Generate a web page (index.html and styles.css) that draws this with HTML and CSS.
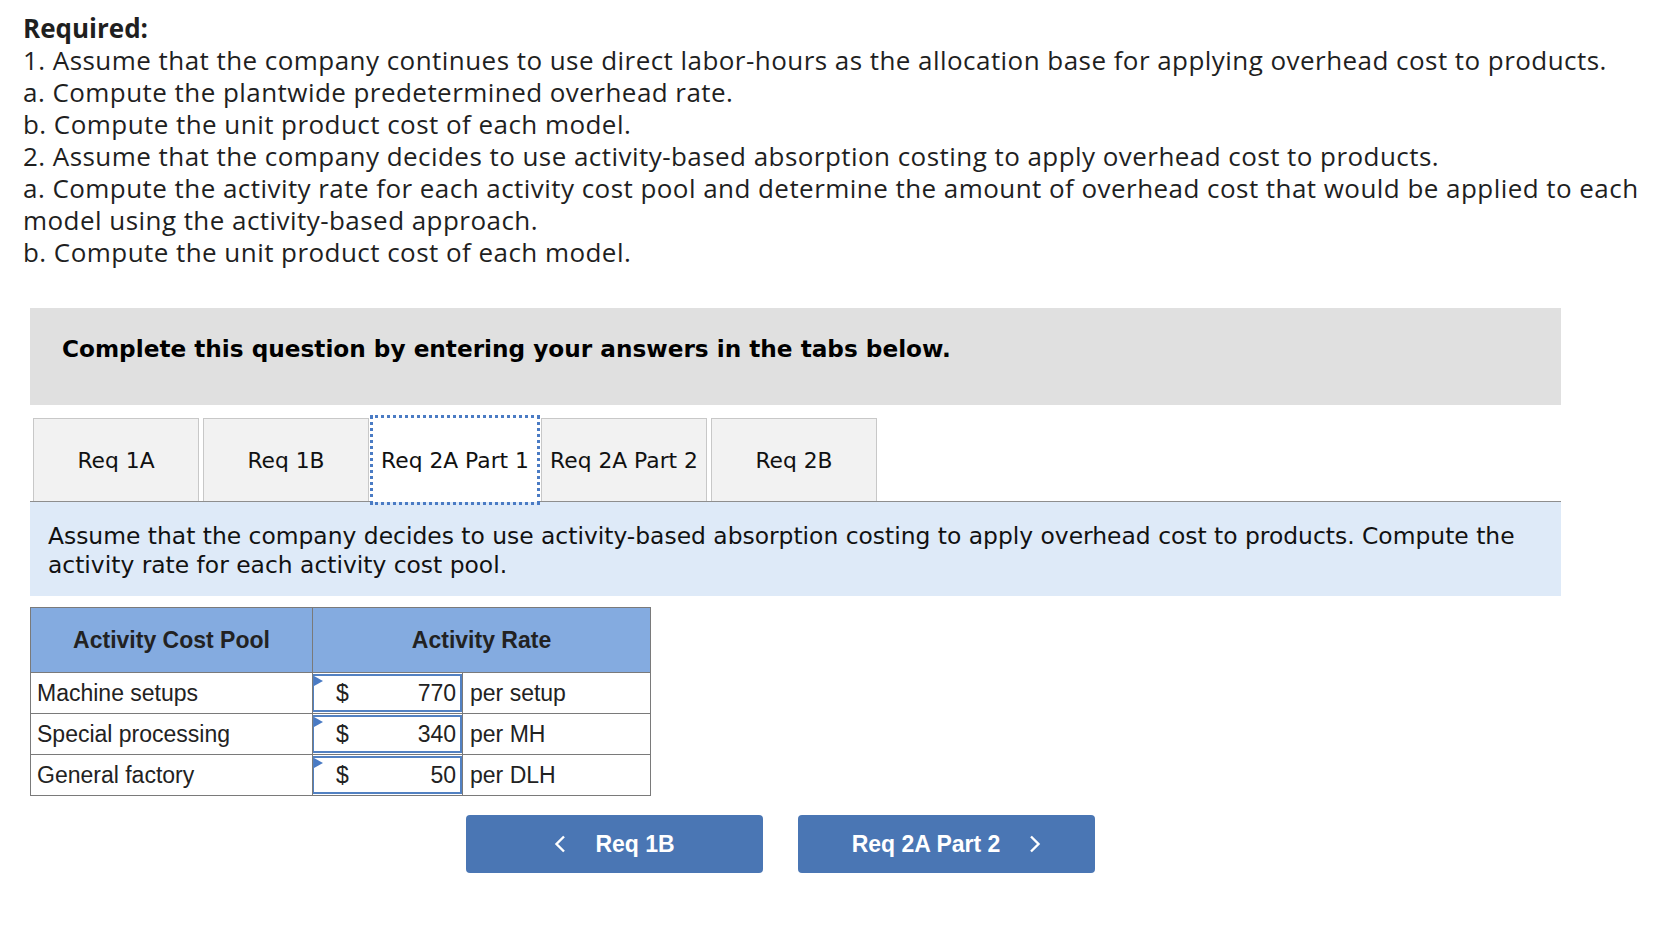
FILE: index.html
```html
<!DOCTYPE HTML>
<html>
<head>
    <meta http-equiv="Content-Type" content="text/html;charset=UTF-8">
    <title>Required</title>
    <link rel="stylesheet" href="styles.css">
</head>
<body>
<div class="required">
    <p class="req-title">Required:</p>
    <p>1. Assume that the company continues to use direct labor-hours as the allocation base for applying overhead cost to products.</p>
    <p>a. Compute the plantwide predetermined overhead rate.</p>
    <p>b. Compute the unit product cost of each model.</p>
    <p>2. Assume that the company decides to use activity-based absorption costing to apply overhead cost to products.</p>
    <p>a. Compute the activity rate for each activity cost pool and determine the amount of overhead cost that would be applied to each model using the activity-based approach.</p>
    <p>b. Compute the unit product cost of each model.</p>
</div>
<div class="question">
    <div class="notice">Complete this question by entering your answers in the tabs below.</div>
    <div class="tabs">
        <div class="tab">Req 1A</div>
        <div class="tab">Req 1B</div>
        <div class="tab active">Req 2A Part 1</div>
        <div class="tab">Req 2A Part 2</div>
        <div class="tab">Req 2B</div>
    </div>
    <div class="prompt">Assume that the company decides to use activity-based absorption costing to apply overhead cost to products. Compute the activity rate for each activity cost pool.</div>
    <table class="rates">
        <colgroup>
            <col class="c-pool">
            <col class="c-rate">
            <col class="c-unit">
        </colgroup>
        <tr>
            <th>Activity Cost Pool</th>
            <th colspan="2">Activity Rate</th>
        </tr>
        <tr>
            <td class="pool">Machine setups</td>
            <td class="cell"><div class="answer"><span class="flag"></span><span>$</span><span>770</span></div></td>
            <td class="unit">per setup</td>
        </tr>
        <tr>
            <td class="pool">Special processing</td>
            <td class="cell"><div class="answer"><span class="flag"></span><span>$</span><span>340</span></div></td>
            <td class="unit">per MH</td>
        </tr>
        <tr>
            <td class="pool">General factory</td>
            <td class="cell"><div class="answer"><span class="flag"></span><span>$</span><span>50</span></div></td>
            <td class="unit">per DLH</td>
        </tr>
    </table>
    <div class="navbtns">
        <button class="navbtn">
            <svg width="12" height="18" viewBox="0 0 12 18"><polyline points="10,1.5 2.5,9 10,16.5" fill="none" stroke="#fff" stroke-width="2.4"/></svg>
            <span>Req 1B</span>
        </button>
        <button class="navbtn">
            <span>Req 2A Part 2</span>
            <svg width="12" height="18" viewBox="0 0 12 18"><polyline points="2,1.5 9.5,9 2,16.5" fill="none" stroke="#fff" stroke-width="2.4"/></svg>
        </button>
    </div>
</div>
</body>
</html>
```

FILE: styles.css
```css
* {
    margin: 0;
    padding: 0;
}

body {
    background: #fff;
    color: #222;
}

.required {
    padding: 12px 0 0 23px;
    font-family: "Open Sans", Lato, sans-serif;
    font-size: 26px;
    letter-spacing: 0.45px;
    line-height: 32px;
    color: #1f1f1f;
}

.req-title {
    font-weight: bold;
    letter-spacing: 0;
}

.question {
    margin: 40px 0 0 30px;
    width: 1531px;
}

.notice {
    height: 97px;
    box-sizing: border-box;
    padding: 26px 32px 0;
    line-height: 30px;
    background: #e0e0e0;
    font-family: "DejaVu Sans", Verdana, sans-serif;
    font-size: 23.2px;
    font-weight: bold;
    color: #000;
}

.tabs {
    display: flex;
    gap: 4px;
    margin-top: 13px;
    padding-left: 3px;
}

.tab {
    width: 166px;
    height: 83px;
    box-sizing: border-box;
    display: flex;
    align-items: center;
    justify-content: center;
    border: 1px solid #c8c8c8;
    border-bottom: none;
    background: #f2f2f2;
    font-family: "DejaVu Sans", Verdana, sans-serif;
    font-size: 21.8px;
    color: #111;
    white-space: nowrap;
}

.tab.active {
    width: 164px;
    height: 84px;
    margin-bottom: -1px;
    position: relative;
    z-index: 1;
    background: #fff;
    border-color: #fff;
    outline: 3px dotted #4a7bc4;
}

.prompt {
    border-top: 1px solid #8e8e8e;
    background: #deeaf8;
    padding: 20px 18px 16px;
    font-family: "DejaVu Sans", Verdana, sans-serif;
    font-size: 23.4px;
    line-height: 29px;
    color: #111;
}

.rates {
    margin-top: 11px;
    border-collapse: collapse;
    table-layout: fixed;
    width: 620px;
    font-family: "Liberation Sans", Arial, sans-serif;
    font-size: 23px;
    color: #222;
}

.c-pool {
    width: 282px;
}

.c-rate {
    width: 150px;
}

.c-unit {
    width: 188px;
}

.rates th {
    height: 64px;
    background: #84abe0;
    border: 1px solid #7a7a7a;
    font-weight: bold;
    text-align: center;
}

.rates td {
    height: 39px;
    border: 1px solid #7a7a7a;
}

.pool {
    padding-left: 6px;
}

.unit {
    padding-left: 7px;
}

.rates td.cell {
    padding: 1px 0 0;
    border-right: none;
    vertical-align: top;
}

.answer {
    position: relative;
    height: 38px;
    box-sizing: border-box;
    display: flex;
    align-items: center;
    justify-content: space-between;
    padding: 0 4px 0 22px;
    border: 2px solid #5281c2;
    border-left-width: 1px;
}

.flag {
    position: absolute;
    top: 0;
    left: 0;
    width: 0;
    height: 0;
    border-left: 9px solid #4a7bc4;
    border-top: 5px solid transparent;
    border-bottom: 5px solid transparent;
}

.navbtns {
    display: flex;
    gap: 35px;
    margin: 19px 0 0 436px;
}

.navbtn {
    width: 297px;
    height: 58px;
    display: flex;
    align-items: center;
    justify-content: center;
    gap: 29px;
    border: none;
    border-radius: 4px;
    background: #4a76b4;
    color: #fff;
    font-family: "Liberation Sans", Arial, sans-serif;
    font-size: 23px;
    font-weight: bold;
    cursor: pointer;
}
```
